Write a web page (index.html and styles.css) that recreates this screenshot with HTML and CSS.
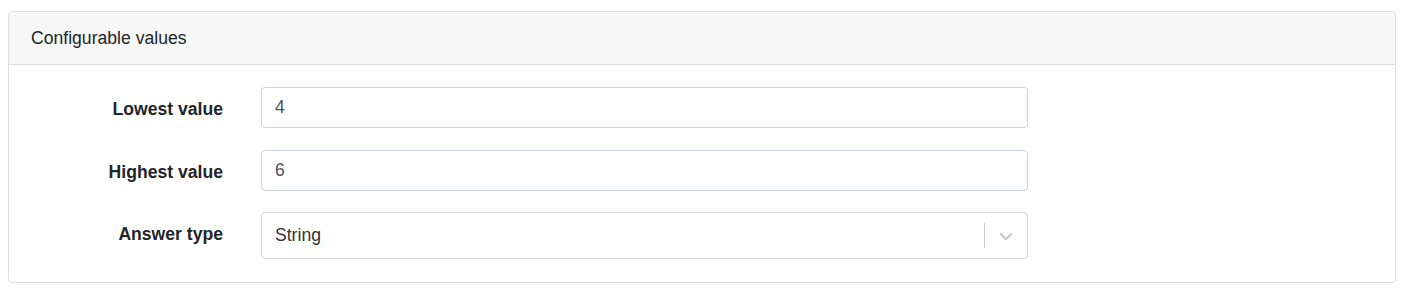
FILE: index.html
```html
<!DOCTYPE html>
<html lang="en">
<head>
    <meta charset="UTF-8">
    <title>Configurable values</title>
    <link rel="stylesheet" href="styles.css">
</head>
<body>
    <div class="page">
        <!-- Panel -->
        <div class="panel">
            <div class="panel-heading">Configurable values</div>
            <div class="panel-body">
                <div class="form-row">
                    <label class="form-label">Lowest value</label>
                    <input type="text" class="input-field" value="4">
                </div>
                <div class="form-row">
                    <label class="form-label">Highest value</label>
                    <input type="text" class="input-field" value="6">
                </div>
                <div class="form-row last">
                    <label class="form-label">Answer type</label>
                    <div class="select-box">
                        <div class="select-value">String</div>
                        <span class="select-sep"></span>
                        <div class="select-arrow">
                            <svg width="22" height="22" viewBox="0 0 20 20"><path d="M4.516 7.548c0.436-0.446 1.043-0.481 1.576 0l3.908 3.747 3.908-3.747c0.533-0.481 1.141-0.446 1.574 0 0.436 0.445 0.408 1.197 0 1.615-0.406 0.418-4.695 4.502-4.695 4.502-0.217 0.223-0.502 0.335-0.787 0.335s-0.57-0.112-0.789-0.335c0 0-4.287-4.084-4.695-4.502s-0.436-1.17 0-1.615z"/></svg>
                        </div>
                    </div>
                </div>
            </div>
        </div>
    </div>
</body>
</html>
```

FILE: styles.css
```css
* {
    margin: 0;
    padding: 0;
    box-sizing: border-box;
    font-family: "Liberation Sans", Arial, sans-serif;
}
body {
    background: #fff;
    color: #212529;
    font-size: 17.6px;
}
.page {
    padding: 11px 8px;
}
/* Panel */
.panel {
    border: 1px solid #dfdfdf;
    border-radius: 4px;
    overflow: hidden;
}
.panel-heading {
    background: #f7f7f7;
    border-bottom: 1px solid #dfdfdf;
    padding: 13px 22px;
    line-height: 26px;
}
.panel-body {
    padding: 22px 22px 23px 22px;
}
/* Form rows */
.form-row {
    display: grid;
    grid-template-columns: 192px 767px;
    column-gap: 38px;
    align-items: start;
    margin-bottom: 21.5px;
}
.form-row.last {
    margin-bottom: 0;
}
.form-label {
    text-align: right;
    font-weight: bold;
    padding-top: 9px;
    line-height: 26px;
}
.input-field {
    height: 41px;
    width: 100%;
    border: 1px solid #ced4da;
    border-radius: 4px;
    padding: 0 13px;
    font-size: 17.6px;
    color: #495057;
    outline: none;
}
/* Select */
.select-box {
    height: 47px;
    border: 1px solid #d4d4d4;
    border-radius: 4px;
    display: flex;
    align-items: center;
}
.select-value {
    flex: 1;
    padding-left: 13px;
    color: #333;
}
.select-sep {
    width: 1px;
    height: 25px;
    background: #ccc;
}
.select-arrow {
    padding: 0 10px;
    display: flex;
    fill: #ccc;
}
```
